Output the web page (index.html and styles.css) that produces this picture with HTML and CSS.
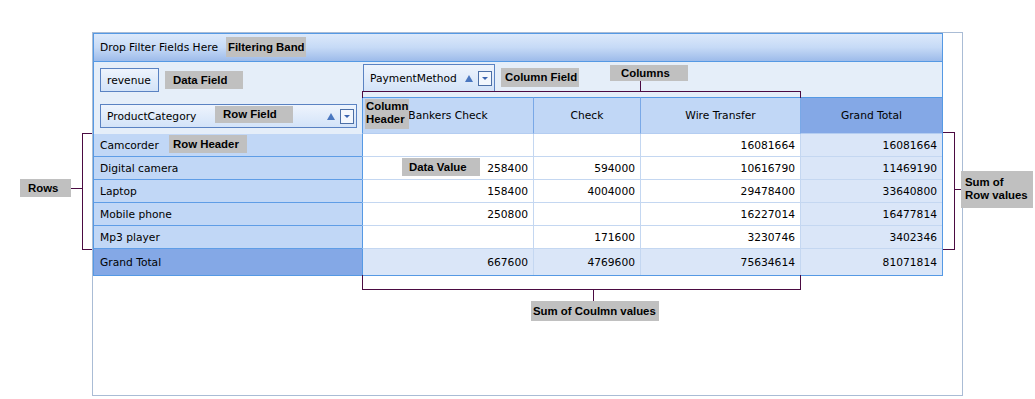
FILE: index.html
```html
<!DOCTYPE html>
<html lang="en">
<head>
    <meta charset="UTF-8">
    <title>Pivot Grid Elements</title>
    <link rel="stylesheet" href="styles.css">
</head>
<body>
<div class="page">
    <div class="frame">
        <div class="pivot">
            <div class="filter-band">Drop Filter Fields Here</div>

            <div class="field-area left-fields">
                <div class="field-btn data-btn">revenue</div>
                <div class="field-btn row-btn">
                    <span class="field-name">ProductCategory</span>
                    <span class="sort-up"></span>
                    <span class="drop-box"><span class="drop-arrow"></span></span>
                </div>
            </div>
            <div class="field-area col-fields">
                <div class="field-btn col-btn">
                    <span class="field-name">PaymentMethod</span>
                    <span class="sort-up"></span>
                    <span class="drop-box"><span class="drop-arrow"></span></span>
                </div>
            </div>

            <div class="col-head first">Bankers Check</div>
            <div class="col-head">Check</div>
            <div class="col-head">Wire Transfer</div>
            <div class="col-head total">Grand Total</div>

            <div class="rh">Camcorder</div>
            <div class="c first"></div>
            <div class="c"></div>
            <div class="c">16081664</div>
            <div class="c total">16081664</div>

            <div class="rh">Digital camera</div>
            <div class="c first">258400</div>
            <div class="c">594000</div>
            <div class="c">10616790</div>
            <div class="c total">11469190</div>

            <div class="rh">Laptop</div>
            <div class="c first">158400</div>
            <div class="c">4004000</div>
            <div class="c">29478400</div>
            <div class="c total">33640800</div>

            <div class="rh">Mobile phone</div>
            <div class="c first">250800</div>
            <div class="c"></div>
            <div class="c">16227014</div>
            <div class="c total">16477814</div>

            <div class="rh">Mp3 player</div>
            <div class="c first"></div>
            <div class="c">171600</div>
            <div class="c">3230746</div>
            <div class="c total">3402346</div>

            <div class="rh gt">Grand Total</div>
            <div class="c first gt">667600</div>
            <div class="c gt">4769600</div>
            <div class="c gt">75634614</div>
            <div class="c total gt">81071814</div>
        </div>
    </div>

    <!-- callouts -->
    <div class="note n-filter">Filtering Band</div>
    <div class="note n-data">Data Field</div>
    <div class="note n-rowfield">Row Field</div>
    <div class="note n-colhead">Column<br>Header</div>
    <div class="note n-colfield">Column Field</div>
    <div class="note n-columns">Columns</div>
    <div class="note n-rowhead">Row Header</div>
    <div class="note n-rows">Rows</div>
    <div class="note n-value">Data Value</div>
    <div class="note n-rowsum">Sum of<br>Row values</div>
    <div class="note n-colsum">Sum of Coulmn values</div>

    <div class="line br-columns"></div>
    <div class="line stem-columns"></div>
    <div class="line br-colsum"></div>
    <div class="line stem-colsum"></div>
    <div class="line br-rows"></div>
    <div class="line stem-rows"></div>
    <div class="line br-rowsum"></div>
    <div class="line stem-rowsum"></div>
</div>
</body>
</html>
```

FILE: styles.css
```css
body {
    margin: 0;
    font-family: "DejaVu Sans", Verdana, sans-serif;
    font-size: 10.7px;
    color: #000;
    background: #fff;
}
.page {
    position: relative;
    width: 1035px;
    height: 399px;
    padding: 32px 0 0 92px;
    box-sizing: border-box;
}
.frame {
    width: 871px;
    height: 364px;
    box-sizing: border-box;
    border: 1px solid #aabcd5;
}

/* pivot grid */
.pivot {
    display: grid;
    grid-template-columns: 268px 172px 107px 160px 141px;
    grid-template-rows: 28px 35px 37px repeat(5, 23px) 26px;
    width: 850px;
    box-sizing: border-box;
    border: 1px solid #5599e4;
}
.filter-band {
    grid-column: 1 / -1;
    padding-left: 6px;
    line-height: 27px;
    border-bottom: 1px solid #5599e4;
    background: linear-gradient(to bottom, #dce9fb 0%, #c6daf6 50%, #9dbbea 100%);
}
.field-area {
    background: #e5eef9;
}
.left-fields {
    grid-column: 1;
    grid-row: 2 / 4;
    padding: 6px 0 0 6px;
}
.col-fields {
    grid-column: 2 / -1;
    grid-row: 2;
    padding: 2px 0 0 1px;
}
.field-btn {
    display: flex;
    align-items: center;
    box-sizing: border-box;
    border: 1px solid #5a82c2;
    background: linear-gradient(to bottom, #eef4fd, #d3e3f8);
    padding-left: 6px;
}
.data-btn {
    width: 59px;
    height: 24px;
}
.row-btn {
    width: 257px;
    height: 24px;
    margin-top: 12px;
}
.col-btn {
    width: 132px;
    height: 28px;
}
.field-name {
    flex: 1;
}
.sort-up {
    width: 0;
    height: 0;
    border-left: 4px solid transparent;
    border-right: 4px solid transparent;
    border-bottom: 7px solid #4a77c0;
    margin-right: 5px;
}
.drop-box {
    display: flex;
    align-items: center;
    justify-content: center;
    width: 14px;
    height: 15px;
    box-sizing: border-box;
    border: 1px solid #4c6fa6;
    background: #f3f7fd;
    margin-right: 2px;
}
.drop-arrow {
    width: 0;
    height: 0;
    border-left: 3px solid transparent;
    border-right: 3px solid transparent;
    border-top: 3px solid #3a64b0;
}

.col-head {
    display: flex;
    align-items: center;
    justify-content: center;
    background: #c1d7f6;
    border-top: 1px solid #5599e4;
    border-right: 1px solid #79a8e7;
    border-bottom: 1px solid #b4cdf1;
}
.col-head.first {
    border-left: 1px solid #5599e4;
}
.col-head.total {
    background: #84a8e6;
    border-right: none;
}

.rh {
    display: flex;
    align-items: center;
    padding-left: 6px;
    background: #c1d7f6;
    border-bottom: 1px solid #5f9de6;
}
.rh.gt {
    background: #84a8e6;
    border-bottom: none;
}
.c {
    display: flex;
    align-items: center;
    justify-content: flex-end;
    padding-right: 5px;
    background: #fff;
    border-right: 1px solid #c4d7f1;
    border-bottom: 1px solid #c4d7f1;
}
.c.first {
    border-left: 1px solid #5599e4;
}
.c.total {
    background: #dae6f8;
    border-right: none;
}
.c.gt {
    background: #dae6f8;
    border-bottom: none;
}

/* callout labels */
.note {
    position: absolute;
    box-sizing: border-box;
    background: #c0c0c0;
    color: #000;
    font: bold 11.4px "Liberation Sans", Arial, sans-serif;
    line-height: 14px;
    white-space: nowrap;
    overflow: hidden;
    padding: 2px 4px 0;
}
.n-filter { left: 226px; top: 37px; width: 80px; height: 20px; padding: 3px 0 0 2px; }
.n-data { left: 165px; top: 71px; width: 78px; height: 18px; padding-left: 8px; }
.n-rowfield { left: 215px; top: 106px; width: 78px; height: 17px; padding-left: 8px; padding-top: 1px; }
.n-colhead { left: 365px; top: 99px; width: 44px; height: 30px; padding: 1px 0 0 1px; line-height: 13px; }
.n-colfield { left: 501px; top: 68px; width: 78px; height: 19px; }
.n-columns { left: 610px; top: 65px; width: 78px; height: 16px; padding: 1px 0 0 11px; }
.n-rowhead { left: 169px; top: 135px; width: 78px; height: 18px; }
.n-rows { left: 20px; top: 179px; width: 51px; height: 18px; padding-left: 8px; }
.n-value { left: 402px; top: 158px; width: 78px; height: 18px; padding-left: 7px; }
.n-rowsum { left: 961px; top: 171px; width: 72px; height: 37px; padding-top: 5px; line-height: 13px; }
.n-colsum { left: 531px; top: 301px; width: 128px; height: 20px; padding: 3px 0 0 2px; }

/* bracket lines */
.line {
    position: absolute;
    box-sizing: border-box;
    border: 0 solid #4b0b42;
}
.br-columns { left: 362px; top: 91px; width: 439px; height: 7px; border-width: 1px 1px 0 1px; }
.stem-columns { left: 640px; top: 81px; width: 1px; height: 10px; border-left-width: 1px; }
.br-colsum { left: 362px; top: 275px; width: 439px; height: 15px; border-width: 0 1px 1px 1px; }
.stem-colsum { left: 593px; top: 289px; width: 1px; height: 12px; border-left-width: 1px; }
.br-rows { left: 82px; top: 133px; width: 10px; height: 117px; border-width: 1px 0 1px 1px; }
.stem-rows { left: 71px; top: 188px; width: 11px; height: 1px; border-top-width: 1px; }
.br-rowsum { left: 943px; top: 132px; width: 12px; height: 118px; border-width: 1px 1px 1px 0; }
.stem-rowsum { left: 954px; top: 189px; width: 7px; height: 1px; border-top-width: 1px; }
```
